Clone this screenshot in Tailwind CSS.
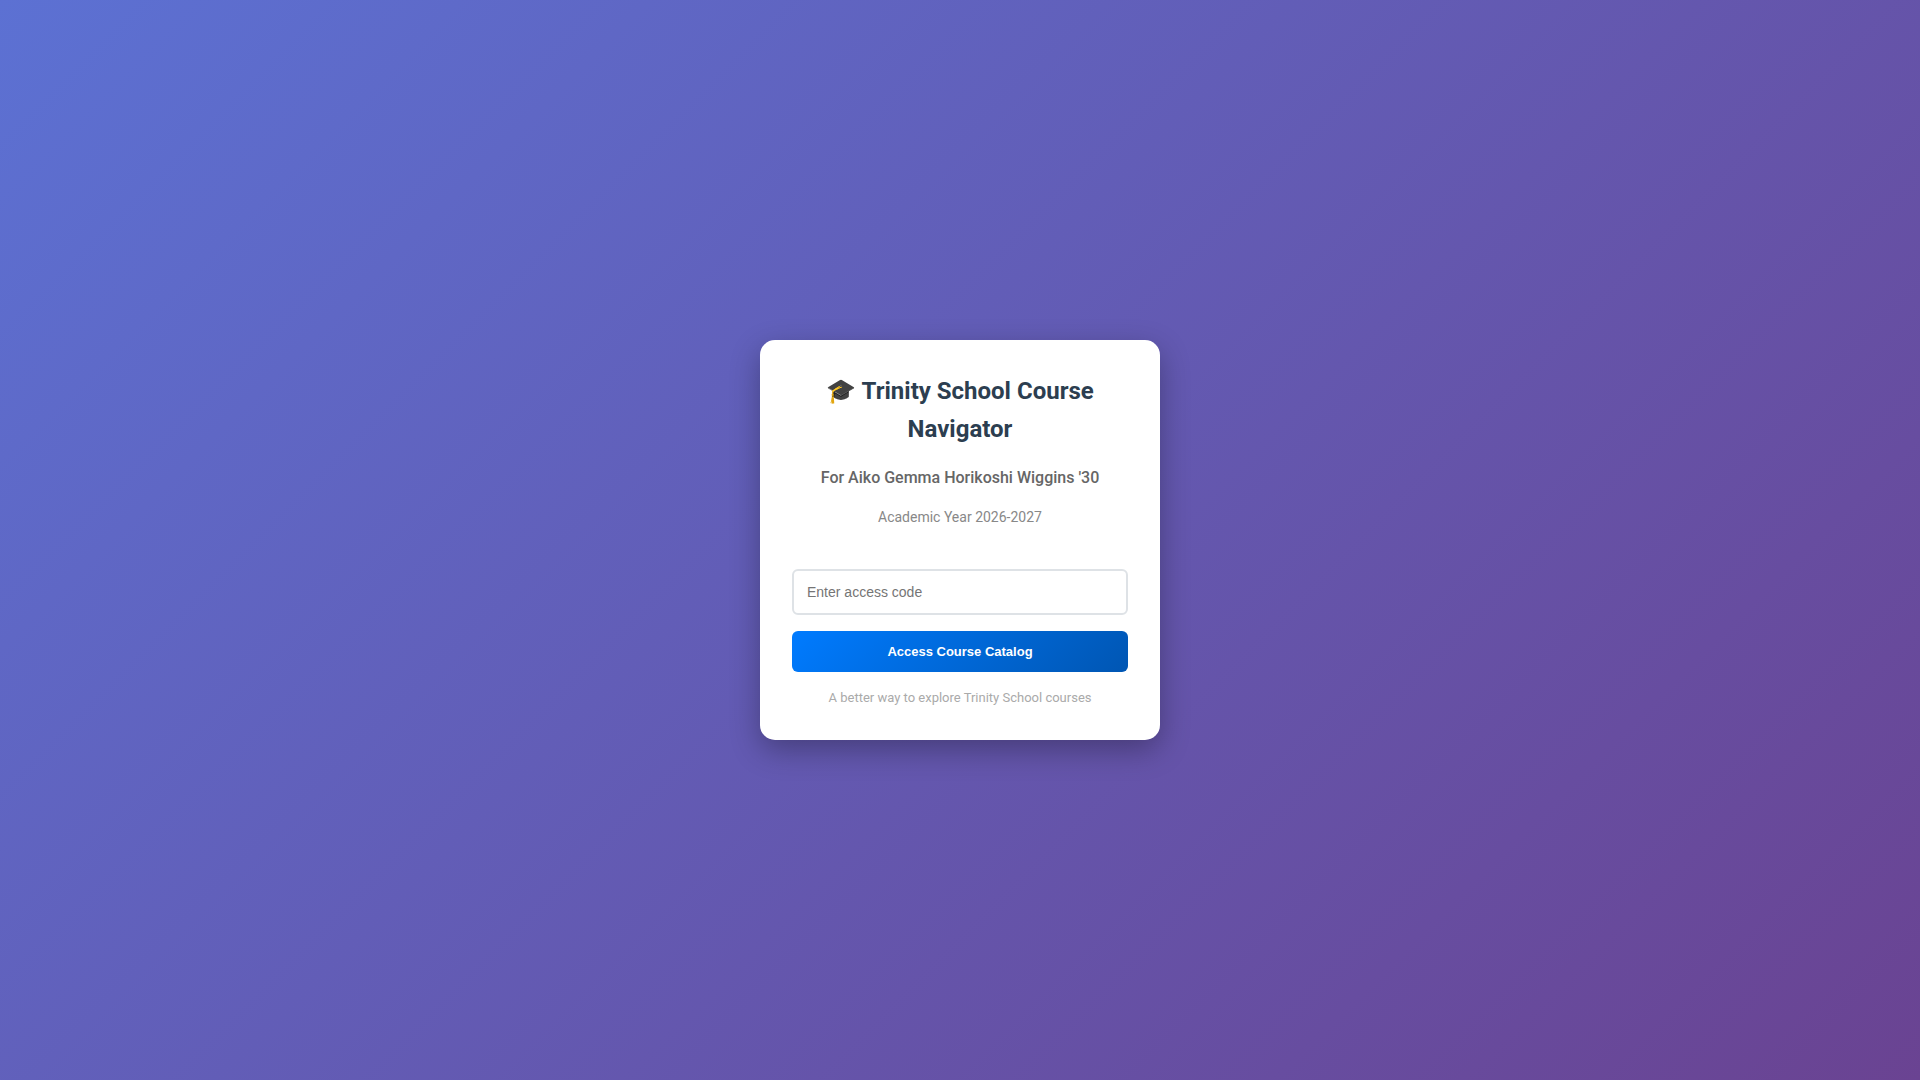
<!DOCTYPE html>
<html lang="en">
<head>
    <meta charset="UTF-8">
    <meta name="viewport" content="width=device-width, initial-scale=1.0">
    <title>Trinity School Course Navigator</title>
    <script src="https://cdn.jsdelivr.net/npm/@tailwindcss/browser@4"></script>
</head>
<body class="min-h-screen flex items-center justify-center bg-[linear-gradient(135deg,#5c71d3_0%,#6a4392_100%)] font-[Roboto,sans-serif]">

    <!-- Login Card -->
    <main class="w-full max-w-[400px] p-8 bg-white rounded-[15px] text-center shadow-[0_10px_30px_rgba(0,0,0,0.3)]">
        <h1 class="mb-4 text-2xl leading-[38px] font-bold text-[#2c3e50]">🎓 Trinity School Course Navigator</h1>
        <p class="mb-3.5 text-base leading-7 font-medium text-[#666]">For Aiko Gemma Horikoshi Wiggins '30</p>
        <p class="mb-10 text-sm leading-[23px] text-[#888]">Academic Year 2026-2027</p>

        <form id="login-form">
            <label for="access-code" class="sr-only">Access code</label>
            <input type="password" id="access-code" placeholder="Enter access code"
                class="block w-full h-[46px] mb-4 px-[13px] rounded-md border-2 border-[#dee2e6] font-[Liberation_Sans,sans-serif] text-sm placeholder:text-[#757575] focus:outline-none focus:border-[#007bff]">
            <button type="submit"
                class="block w-full h-[41px] rounded-md bg-[linear-gradient(135deg,#007bff_0%,#0056b3_100%)] font-[Liberation_Sans,sans-serif] text-[13px] font-bold text-white cursor-pointer">Access Course Catalog</button>
        </form>

        <p class="mt-4 text-[13px] leading-5 text-[#aaa]">A better way to explore Trinity School courses</p>
    </main>

    <script>
        document.getElementById("login-form").addEventListener("submit", function (e) {
            e.preventDefault();
        });
    </script>

</body>
</html>
